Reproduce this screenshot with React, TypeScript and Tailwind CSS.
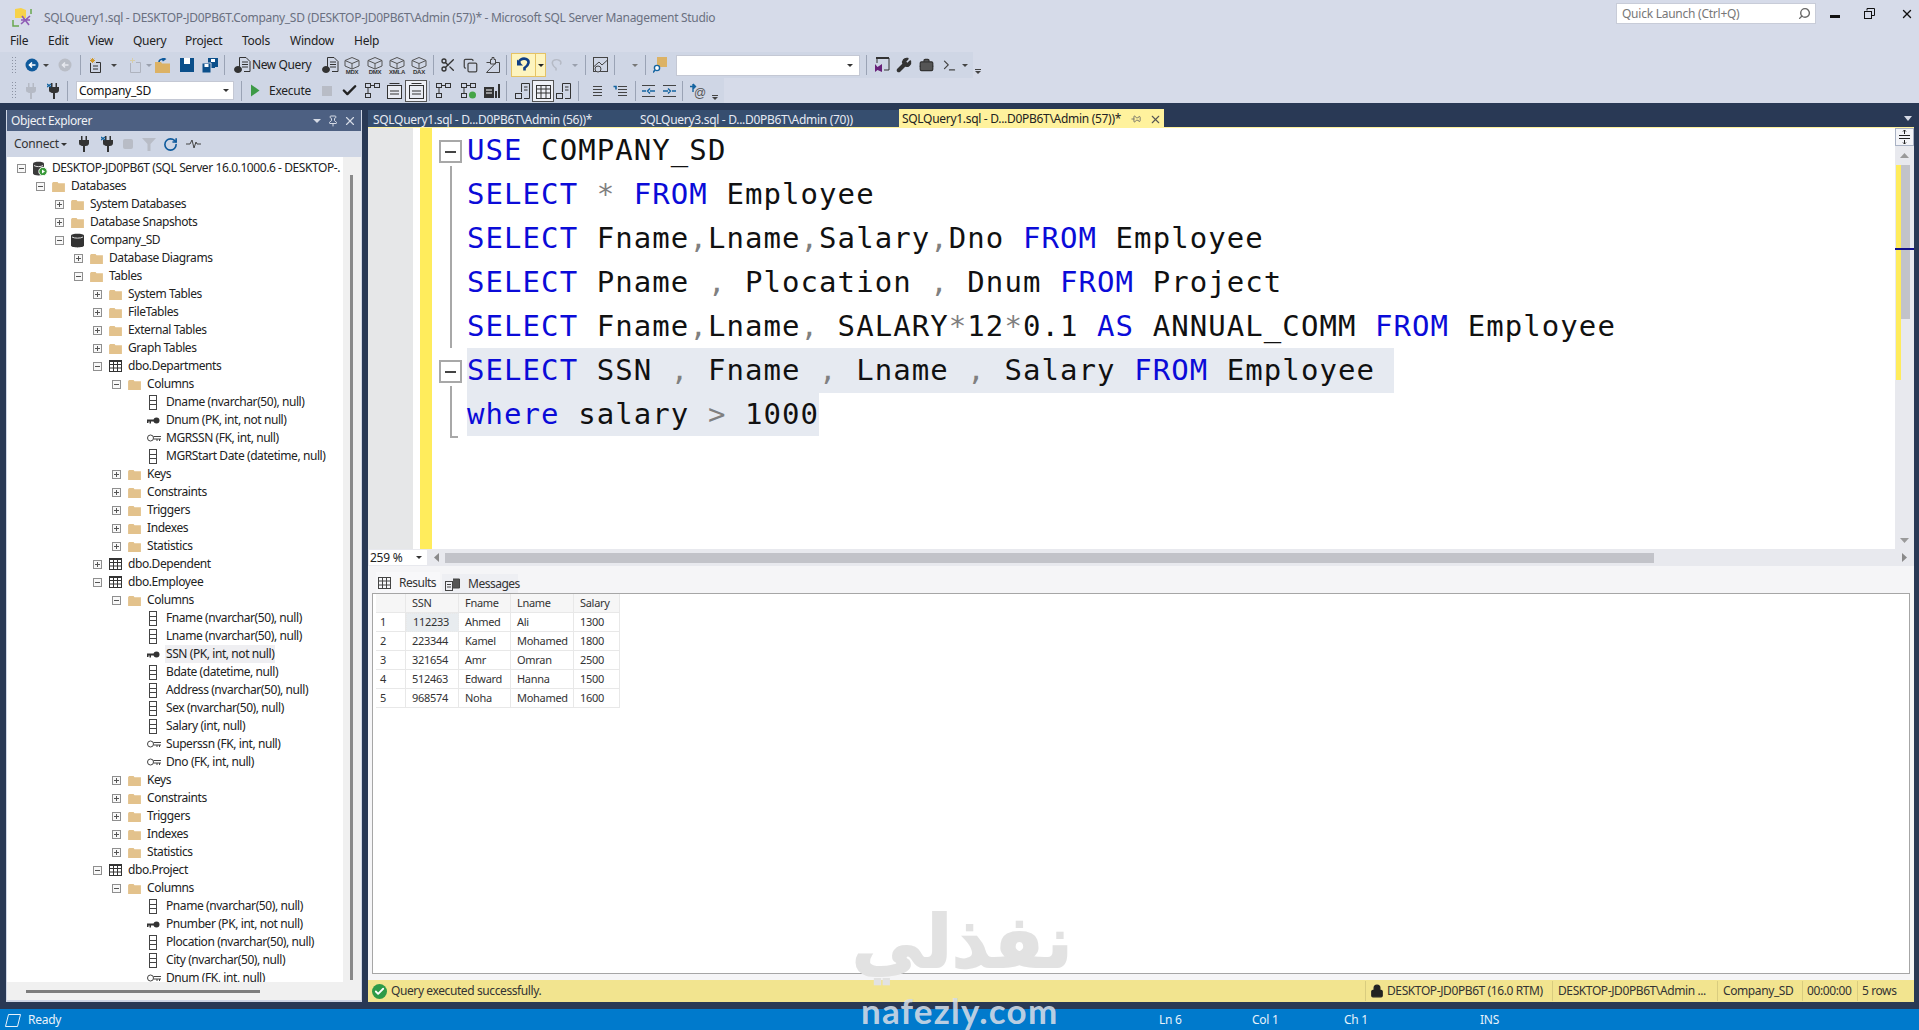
import React from "react"
import { Scissors, Copy, Pin, X, Wrench, BriefcaseBusiness, Check, RotateCw, Search, Lock, Terminal } from "lucide-react"

type IconKind = "server" | "folder" | "db" | "table" | "col" | "pk" | "fk"
type Row = [number, "+" | "-" | "", IconKind, string, boolean?]

const subFolders = (): Row[] =>
  ["Keys", "Constraints", "Triggers", "Indexes", "Statistics"].map((t) => [5, "+", "folder", t] as Row)

const tree: Row[] = [
  [0, "-", "server", "DESKTOP-JD0PB6T (SQL Server 16.0.1000.6 - DESKTOP-."],
  [1, "-", "folder", "Databases"],
  [2, "+", "folder", "System Databases"],
  [2, "+", "folder", "Database Snapshots"],
  [2, "-", "db", "Company_SD"],
  [3, "+", "folder", "Database Diagrams"],
  [3, "-", "folder", "Tables"],
  [4, "+", "folder", "System Tables"],
  [4, "+", "folder", "FileTables"],
  [4, "+", "folder", "External Tables"],
  [4, "+", "folder", "Graph Tables"],
  [4, "-", "table", "dbo.Departments"],
  [5, "-", "folder", "Columns"],
  [6, "", "col", "Dname (nvarchar(50), null)"],
  [6, "", "pk", "Dnum (PK, int, not null)"],
  [6, "", "fk", "MGRSSN (FK, int, null)"],
  [6, "", "col", "MGRStart Date (datetime, null)"],
  ...subFolders(),
  [4, "+", "table", "dbo.Dependent"],
  [4, "-", "table", "dbo.Employee"],
  [5, "-", "folder", "Columns"],
  [6, "", "col", "Fname (nvarchar(50), null)"],
  [6, "", "col", "Lname (nvarchar(50), null)"],
  [6, "", "pk", "SSN (PK, int, not null)", true],
  [6, "", "col", "Bdate (datetime, null)"],
  [6, "", "col", "Address (nvarchar(50), null)"],
  [6, "", "col", "Sex (nvarchar(50), null)"],
  [6, "", "col", "Salary (int, null)"],
  [6, "", "fk", "Superssn (FK, int, null)"],
  [6, "", "fk", "Dno (FK, int, null)"],
  ...subFolders(),
  [4, "-", "table", "dbo.Project"],
  [5, "-", "folder", "Columns"],
  [6, "", "col", "Pname (nvarchar(50), null)"],
  [6, "", "pk", "Pnumber (PK, int, not null)"],
  [6, "", "col", "Plocation (nvarchar(50), null)"],
  [6, "", "col", "City (nvarchar(50), null)"],
  [6, "", "fk", "Dnum (FK, int, null)"],
]

const results = [
  ["1", "112233", "Ahmed", "Ali", "1300"],
  ["2", "223344", "Kamel", "Mohamed", "1800"],
  ["3", "321654", "Amr", "Omran", "2500"],
  ["4", "512463", "Edward", "Hanna", "1500"],
  ["5", "968574", "Noha", "Mohamed", "1600"],
]

function TreeIcon({ kind }: { kind: IconKind }) {
  if (kind === "folder")
    return (
      <svg width="13" height="11" viewBox="0 0 14 12">
        <path d="M0 2.5 L1 1 H6 L7 2.5 H14 V12 H0 Z" fill="#e3c28c" />
      </svg>
    )
  if (kind === "db")
    return (
      <svg width="13" height="15" viewBox="0 0 13 15">
        <path d="M0 2.5 C0 0 13 0 13 2.5 V12.5 C13 15 0 15 0 12.5 Z" fill="#333" />
        <path d="M1 4 C3 5.5 10 5.5 12 4" stroke="#ddd" fill="none" />
      </svg>
    )
  if (kind === "server")
    return (
      <svg width="15" height="15" viewBox="0 0 15 15">
        <path d="M0 2.5 C0 0 11 0 11 2.5 V12.5 C11 15 0 15 0 12.5 Z" fill="#3a3a3a" />
        <path d="M1 4.5 C3 6 8 6 10 4.5" stroke="#ddd" fill="none" />
        <circle cx="10" cy="10.5" r="4.2" fill="#3a9a3a" stroke="#fff" />
        <path d="M9 8.5 L12 10.5 L9 12.5 Z" fill="#fff" />
      </svg>
    )
  if (kind === "table")
    return (
      <svg width="13" height="12" viewBox="0 0 13 12" fill="none" stroke="#333">
        <rect x="0.5" y="0.5" width="12" height="11" />
        <path d="M0 1.5 H13 M0 4.5 H13 M0 8 H13 M4.5 0 V12 M8.5 0 V12" />
      </svg>
    )
  if (kind === "col")
    return (
      <svg width="8" height="15" viewBox="0 0 8 15" className="ml-[2px]" fill="none" stroke="#444">
        <rect x="0.5" y="0.5" width="7" height="14" />
        <path d="M0 5.5 H8 M0 9.5 H8" />
      </svg>
    )
  if (kind === "pk")
    return (
      <svg width="13" height="7" viewBox="0 0 13 7">
        <circle cx="9.5" cy="3.5" r="3" fill="#333" />
        <path d="M0 2.5 H8 V4.5 H4 V6.5 H2.5 V4.5 H1.5 V6 H0 Z" fill="#333" />
      </svg>
    )
  return (
    <svg width="14" height="8" viewBox="0 0 14 8" fill="none" stroke="#444">
      <circle cx="3.5" cy="4" r="3" />
      <path d="M6.5 2.5 H14 M6.5 5 H14 M10 5 V7 M12.5 5 V7" />
    </svg>
  )
}

function TreeRow({ row }: { row: Row }) {
  const [depth, exp, icon, text, hovered] = row
  return (
    <div className="h-[18px] flex items-center whitespace-nowrap tracking-[-0.42px]" style={{ paddingLeft: 10 + depth * 19 }}>
      <div className="w-[16px] shrink-0">
        {exp && (
          <div className="w-[9px] h-[9px] border border-[#8f8f8f] flex items-center justify-center relative bg-[#f8f8f8]">
            <div className="w-[5px] h-px bg-[#555]" />
            {exp === "+" && <div className="absolute w-px h-[5px] bg-[#555]" />}
          </div>
        )}
      </div>
      <div className="w-[19px] shrink-0 flex items-center">
        <TreeIcon kind={icon} />
      </div>
      <span className={hovered ? "bg-[#efeff2] -mx-px px-px text-[#222]" : "text-[#222]"}>{text}</span>
    </div>
  )
}

// toolbar pieces
function Tool({ className = "", children }: { className?: string; children?: React.ReactNode }) {
  return <div className={`w-[20px] h-[20px] shrink-0 flex items-center justify-center ${className}`}>{children}</div>
}
function Drop({ className = "", color = "#444" }: { className?: string; color?: string }) {
  return (
    <div className={`w-[8px] shrink-0 flex justify-center ${className}`}>
      <svg width="6" height="3" viewBox="0 0 6 3">
        <path d="M0 0 H6 L3 3 Z" fill={color} />
      </svg>
    </div>
  )
}
function Sep({ className = "" }: { className?: string }) {
  return <div className={`w-px h-[20px] shrink-0 bg-[#9aa3b5] ${className}`} />
}
function Grip() {
  return <div className="w-[6px] h-[19px] shrink-0 ml-[1px] mr-[1px] bg-[radial-gradient(#8c93a3_0.7px,transparent_0.8px)] bg-[length:3px_3px]" />
}
function Overflow({ className = "" }: { className?: string }) {
  return (
    <div className={`w-[8px] h-[20px] shrink-0 flex flex-col items-center justify-end pb-[1px] gap-[1px] ${className}`}>
      <div className="w-[6px] h-px bg-[#444]" />
      <svg width="6" height="3" viewBox="0 0 6 3">
        <path d="M0 0 H6 L3 3 Z" fill="#444" />
      </svg>
    </div>
  )
}
function Circle({ fill, arrow }: { fill: string; arrow: string }) {
  return (
    <svg width="14" height="14" viewBox="0 0 14 14">
      <circle cx="7" cy="7" r="6.5" fill={fill} />
      <path d="M10.5 7 H5 M7 4.5 L4.5 7 L7 9.5" stroke={arrow} strokeWidth="1.6" fill="none" />
    </svg>
  )
}
function DocDb() {
  return (
    <svg width="17" height="16" viewBox="0 0 17 16" fill="none" stroke="#333">
      <path d="M5.5 10 V0.5 H12 L16 4.5 V14.5 H10" />
      <path d="M8 5 H14 M8 7.5 H14 M8 10 H14" />
      <ellipse cx="4" cy="12.5" rx="3.5" ry="3" fill="#333" />
    </svg>
  )
}
function Cube({ label }: { label: string }) {
  return (
    <svg width="18" height="17" viewBox="0 0 18 17" fill="none">
      <path d="M9 0.5 L16 3.5 V9 L9 12 L2 9 V3.5 Z M2 3.5 L9 6.5 L16 3.5 M9 6.5 V12" stroke="#555" />
      <text x="9" y="16.5" textAnchor="middle" fontSize="6" fontWeight="700" fill="#333" fontFamily="Liberation Sans, sans-serif">
        {label}
      </text>
    </svg>
  )
}
function Save({ double }: { double?: boolean }) {
  if (double)
    return (
      <svg width="16" height="15" viewBox="0 0 16 15">
        <path d="M6 0 H16 V9 H13 V10 H6 Z" fill="#0b4f8a" />
        <rect x="9" y="1" width="4" height="3" fill="#fff" />
        <path d="M0 5 H9 V15 H0 Z" fill="#0b4f8a" stroke="#cfd6e5" />
        <rect x="2.5" y="6" width="4" height="3" fill="#fff" />
      </svg>
    )
  return (
    <svg width="14" height="14" viewBox="0 0 14 14">
      <path d="M0 0 H14 V14 H0 Z" fill="#0b4f8a" />
      <rect x="4" y="0" width="6" height="6" fill="#fff" />
    </svg>
  )
}
function Flow({ mark = false }: { mark?: boolean }) {
  return (
    <svg width="15" height="16" viewBox="0 0 15 16" fill="none" stroke="#333">
      <rect x="0.5" y="0.5" width="5" height="4" />
      <rect x="9.5" y="0.5" width="5" height="4" />
      <rect x="0.5" y="10.5" width="5" height="4" />
      <path d="M6 2.5 H9 M3 5 V10" />
      {mark ? <circle cx="11.5" cy="12" r="3.5" fill="#46a546" stroke="none" /> : null}
    </svg>
  )
}
function Pane({ grid }: { grid?: boolean }) {
  return (
    <svg width="15" height="16" viewBox="0 0 15 16" fill="none" stroke="#333">
      <rect x="0.5" y="2.5" width="14" height="13" fill={grid ? "none" : "#e8ebf2"} />
      <path d={grid ? "M1 6 H14 M1 10 H14 M5 3 V15 M10 3 V15" : "M2.5 0.5 H12.5 M3 8 H12 M3 11 H12"} />
    </svg>
  )
}
function DocResult() {
  return (
    <svg width="15" height="16" viewBox="0 0 15 16" fill="none" stroke="#333">
      <path d="M6.5 9 V0.5 H14.5 V15.5 H9" />
      <path d="M9 4 H12.5 M9 7 H12.5" />
      <rect x="0.5" y="10.5" width="6" height="5" />
    </svg>
  )
}
function Indent({ flip }: { flip?: boolean }) {
  return (
    <svg width="15" height="14" viewBox="0 0 15 14" fill="none" stroke="#444">
      <path d="M1 1.5 H14 M1 12.5 H14" />
      <path d={flip ? "M1 7 H5 M9 7 H14 M9 4.5 L6.5 7 L9 9.5" : "M1 7 H6 M10 7 H14 M6 4.5 L8.5 7 L6 9.5"} stroke="#1464a0" strokeWidth="1.4" />
    </svg>
  )
}
function Lines({ blue }: { blue?: boolean }) {
  return (
    <svg width="15" height="14" viewBox="0 0 15 14" fill="none" stroke="#444">
      <path d="M5 2.5 H14 M5 5.5 H14 M5 8.5 H14 M5 11.5 H14" />
      {blue ? <path d="M0.5 2.5 H3 V5.5" stroke="#1464a0" strokeWidth="1.6" /> : null}
    </svg>
  )
}
function Plug({ color, cross }: { color: string; cross?: boolean }) {
  return (
    <svg width="14" height="16" viewBox="0 0 14 16" fill={color}>
      <path d="M4 0 H5.5 V4 H8.5 V0 H10 V4 H12 V7 C12 10 9 10 8 10 V16 H6 V10 C5 10 2 10 2 7 V4 H4 Z" />
      {cross ? <path d="M0 1 L4 4 M4 1 L0 4" stroke="#1464a0" strokeWidth="1.4" /> : null}
    </svg>
  )
}

function Toolbar1() {
  return (
    <div className="h-[26px] flex items-center pl-[10px]">
      <div className="flex items-center h-[26px] w-[973px] bg-[#cfd6e5] -ml-[10px] pl-[10px] shrink-0">
        <Grip />
        <Tool className="ml-[4px]"><Circle fill="#0f5a9c" arrow="#fff" /></Tool>
        <Drop />
        <Tool className="ml-[5px]"><Circle fill="#b9bdc6" arrow="#e6e8ee" /></Tool>
        <Sep className="ml-[5px]" />
        <Tool className="ml-[4px]">
          <svg width="15" height="16" viewBox="0 0 15 16" fill="none" stroke="#333">
            <path d="M2.5 6 V15.5 H12.5 V5.5 H8" />
            <path d="M4.5 1 V6 M2 3.5 H7 M2.7 1.7 L6.3 5.3 M6.3 1.7 L2.7 5.3" stroke="#d29a2e" />
            <path d="M5 9 H10 M5 12 H10" />
          </svg>
        </Tool>
        <Drop className="ml-[5px]" />
        <Tool className="ml-[7px]">
          <svg width="15" height="16" viewBox="0 0 15 16" fill="none" stroke="#aeb3be">
            <path d="M2.5 6 V15.5 H12.5 V5.5 H8" />
            <path d="M4.5 1 V6 M2 3.5 H7" stroke="#d8cda8" />
          </svg>
        </Tool>
        <Drop color="#9aa0ad" />
        <Tool>
          <svg width="16" height="15" viewBox="0 0 16 15">
            <path d="M0 4 H6 L7 5.5 H15 V15 H0 Z" fill="#dcb265" />
            <path d="M4 4 C4 1.5 7 1 9 1 M7.5 -0.5 L10 1 L7.5 3" stroke="#0f5a9c" strokeWidth="1.6" fill="none" />
          </svg>
        </Tool>
        <Tool className="ml-[4px]"><Save /></Tool>
        <Tool className="ml-[3px]"><Save double /></Tool>
        <Sep className="ml-[4px]" />
        <Tool className="ml-[7px]"><DocDb /></Tool>
        <span className="w-[60px] shrink-0 text-[#222] whitespace-nowrap tracking-[-0.4px]">New Query</span>
        <Tool className="ml-[8px]"><DocDb /></Tool>
        <Tool className="ml-[2px]"><Cube label="MDX" /></Tool>
        <Tool className="ml-[3px]"><Cube label="DMX" /></Tool>
        <Tool className="ml-[2px]"><Cube label="XMLA" /></Tool>
        <Tool className="ml-[2px]"><Cube label="DAX" /></Tool>
        <Sep className="ml-[4px]" />
        <Tool className="ml-[4px]"><Scissors size={16} color="#333" /></Tool>
        <Tool className="ml-[2px]"><Copy size={15} color="#444" /></Tool>
        <Tool className="ml-[3px]">
          <svg width="14" height="16" viewBox="0 0 14 16" fill="none" stroke="#444">
            <path d="M0.5 5.5 H4 M10 5.5 H13.5 V15.5 H0.5 Z M4.5 5 V2.5 H6 V0.5 H8 V2.5 H9.5 V7 H4.5 Z" />
          </svg>
        </Tool>
        <Sep className="ml-[3px]" />
        <div className="ml-[4px] w-[35px] h-[24px] shrink-0 bg-[#fdf4bf] border border-[#e5c365] flex items-center">
          <div className="w-[24px] flex justify-center">
            <svg width="14" height="16" viewBox="0 0 14 16" fill="none">
              <path d="M3 7 C0 3 6 1 9 2 C13 3.5 12 8 7.5 11 V13.5" stroke="#0f3f86" strokeWidth="2.6" />
              <path d="M0 2.5 V8.5 H6 Z" fill="#0f3f86" />
            </svg>
          </div>
          <div className="w-px h-full bg-[#e5c365]" />
          <Drop className="w-[9px]" color="#222" />
        </div>
        <Tool>
          <svg width="13" height="15" viewBox="0 0 14 16" fill="none">
            <path d="M11 7 C14 3 8 1 5 2 C1 3.5 2 8 6.5 11 V13.5" stroke="#b5bac5" strokeWidth="1.6" />
          </svg>
        </Tool>
        <Drop className="ml-[5px]" color="#9aa0ad" />
        <Sep className="ml-[6px]" />
        <Tool className="ml-[4px]">
          <svg width="15" height="16" viewBox="0 0 15 16" fill="none" stroke="#444">
            <rect x="0.5" y="0.5" width="14" height="14" />
            <path d="M0.5 10 L6 5 L9 8 L14.5 3" />
            <circle cx="5" cy="12" r="3" fill="#cfd6e5" />
          </svg>
        </Tool>
        <Sep className="ml-[4px]" />
        <Drop className="ml-[16px]" color="#777" />
        <Sep className="ml-[6px]" />
        <Tool className="ml-[4px]">
          <svg width="15" height="16" viewBox="0 0 15 16">
            <path d="M4 0 H14 V10 H4 Z" fill="#dcb265" />
            <circle cx="4" cy="11" r="2.6" fill="#fff" stroke="#1464a0" strokeWidth="1.4" />
            <path d="M2 13 L0 15.5" stroke="#1464a0" strokeWidth="1.6" />
          </svg>
        </Tool>
        <div className="ml-[6px] w-[184px] h-[21px] shrink-0 bg-white border border-[#c4c8d4] flex items-center justify-end pr-[5px]">
          <Drop className="w-[6px]" color="#333" />
        </div>
        <Sep className="ml-[6px]" />
        <Tool className="ml-[5px]">
          <svg width="15" height="16" viewBox="0 0 15 16" fill="none">
            <path d="M2 6 V1 H14 V13 H9" stroke="#333" />
            <path d="M1 1 H14" stroke="#333" strokeWidth="2" />
            <path d="M0 7 V15 L2.5 13 L7 15 V7 L2.5 10 Z" fill="#68217a" />
          </svg>
        </Tool>
        <Tool className="ml-[2px]"><Wrench size={16} color="#333" fill="#333" /></Tool>
        <Tool className="ml-[2px]"><BriefcaseBusiness size={15} color="#333" fill="#555" /></Tool>
        <Tool className="ml-[3px]"><Terminal size={15} color="#444" /></Tool>
        <Drop className="ml-[2px]" />
        <Overflow className="ml-[5px]" />
      </div>
    </div>
  )
}

function Toolbar2() {
  return (
    <div className="h-[25px] flex items-center">
      <div className="flex items-center h-[25px] w-[724px] bg-[#cfd6e5] pl-[10px] shrink-0">
        <Grip />
        <Tool className="ml-[3px]"><Plug color="#b5bac5" /></Tool>
        <Tool className="ml-[3px]"><Plug color="#333" cross /></Tool>
        <Sep className="ml-[3px]" />
        <div className="ml-[8px] w-[158px] h-[19px] shrink-0 bg-white border border-[#c4c8d4] flex items-center justify-between pl-[2px] pr-[3px]">
          <span className="text-[#111]">Company_SD</span>
          <Drop className="w-[6px]" color="#333" />
        </div>
        <Sep className="ml-[7px]" />
        <svg width="10" height="13" viewBox="0 0 10 13" className="ml-[8px] shrink-0">
          <path d="M1 0.5 L9.5 6.5 L1 12.5 Z" fill="#3d9a46" />
        </svg>
        <span className="ml-[9px] w-[41px] shrink-0 text-[#222]">Execute</span>
        <Tool className="ml-[7px]"><div className="w-[10px] h-[10px] bg-[#b8bcc6]" /></Tool>
        <Tool className="ml-[2px]"><Check size={17} color="#222" strokeWidth={3.4} /></Tool>
        <Tool className="ml-[3px]"><Flow /></Tool>
        <Tool className="ml-[2px]"><Pane /></Tool>
        <Tool className="ml-[2px] bg-[#eef0f6] outline outline-[#555]"><Pane /></Tool>
        <Sep className="ml-[3px]" />
        <Tool className="ml-[3px]"><Flow /></Tool>
        <Tool className="ml-[5px]"><Flow mark /></Tool>
        <Tool className="ml-[4px]">
          <svg width="16" height="14" viewBox="0 0 16 14" fill="#333">
            <path d="M0 3 H10 V14 H0 Z M11 7 H13 V14 H11 Z M14 0 H16 V14 H14 Z" />
            <path d="M2 6 H8 M2 9 H8" stroke="#fff" />
          </svg>
        </Tool>
        <Sep className="ml-[4px]" />
        <Tool className="ml-[5px]"><DocResult /></Tool>
        <Tool className="ml-[1px] bg-[#eef0f6] outline outline-[#555]"><Pane grid /></Tool>
        <Tool><DocResult /></Tool>
        <Sep className="ml-[5px]" />
        <Tool className="ml-[6px]"><Lines /></Tool>
        <Tool className="ml-[5px]"><Lines blue /></Tool>
        <Sep className="ml-[5px]" />
        <Tool className="ml-[2px]"><Indent flip /></Tool>
        <Tool className="ml-[1px]"><Indent /></Tool>
        <Sep className="ml-[3px]" />
        <Tool className="ml-[4px]">
          <svg width="17" height="16" viewBox="0 0 17 16" fill="none">
            <path d="M1 3.5 H6 M4 1 L6.5 3.5 L4 6 M4 1 V9" stroke="#1464a0" strokeWidth="1.4" />
            <text x="11" y="14" textAnchor="middle" fontSize="12" fill="#555" fontFamily="Liberation Sans, sans-serif">@</text>
          </svg>
        </Tool>
        <Overflow className="ml-[4px]" />
      </div>
    </div>
  )
}

function ObjectExplorer() {
  return (
    <div className="w-[356px] shrink-0 flex flex-col bg-[#f0f0f0] border-b-2 border-x border-[#cfd6e5]">
      <div className="h-[21px] shrink-0 bg-[#4d6082] flex items-center pl-[4px] pr-[4px] text-[#f0f2f6] tracking-[-0.4px]">
        <span className="flex-1">Object Explorer</span>
        <svg width="8" height="4" viewBox="0 0 8 4" className="mr-[6px]">
          <path d="M0 0 H8 L4 4 Z" fill="#d5dae5" />
        </svg>
        <Pin size={12} color="#d5dae5" className="mr-[4px]" />
        <X size={14} color="#d5dae5" />
      </div>
      <div className="h-[26px] shrink-0 bg-[#cfd6e5] flex items-center pl-[7px] text-[#333]">
        <span>Connect</span>
        <Drop className="ml-[1px]" color="#333" />
        <Tool className="ml-[6px]"><Plug color="#333" /></Tool>
        <Tool className="ml-[4px]"><Plug color="#333" cross /></Tool>
        <Tool><div className="w-[10px] h-[10px] rounded-[2px] bg-[#b8bcc6]" /></Tool>
        <Tool className="ml-[1px]">
          <svg width="14" height="14" viewBox="0 0 14 14">
            <path d="M0 1 H14 L8.5 7 V14 H5.5 V7 Z" fill="#b8bcc6" />
          </svg>
        </Tool>
        <Tool className="ml-[2px]"><RotateCw size={15} color="#0f5a9c" strokeWidth={2.6} /></Tool>
        <Tool className="ml-[3px]">
          <svg width="15" height="10" viewBox="0 0 15 10" fill="none" stroke="#444">
            <path d="M0 5 H4 L6 1 L8 9 L10 3 L11 5 H15" />
          </svg>
        </Tool>
      </div>
      <div className="flex-1 flex min-h-0">
        <div className="w-[336px] shrink-0 flex flex-col">
          <div className="flex-1 bg-white overflow-hidden pt-[2px] min-h-0">
            {tree.map((row, i) => (
              <TreeRow key={i} row={row} />
            ))}
          </div>
          <div className="h-[18px] shrink-0 flex items-center pl-[19px]">
            <div className="w-[234px] h-[3px] bg-[#7d7d7d]" />
          </div>
        </div>
        <div className="flex-1 pt-[18px] pb-[20px] pl-[7px]">
          <div className="w-[3px] h-full bg-[#8a8a8a]" />
        </div>
      </div>
    </div>
  )
}

function Tok({ k, o, children }: { k?: boolean; o?: boolean; children: React.ReactNode }) {
  return <span className={k ? "text-[#0b0bd8]" : o ? "text-[#808080]" : ""}>{children}</span>
}

function FoldRow({ type }: { type: "box" | "line" }) {
  return (
    <div className="h-[44px] w-[23px] ml-[7px] flex flex-col items-center">
      {type === "box" ? (
        <>
          <div className="mt-[12px] w-[23px] h-[23px] shrink-0 border-2 border-[#a8a8a8] flex items-center justify-center">
            <div className="w-[11px] h-[2px] bg-[#444]" />
          </div>
          <div className="mt-[3px] flex-1 w-[2px] bg-[#a8a8a8]" />
        </>
      ) : (
        <div className="h-full w-[2px] bg-[#a8a8a8]" />
      )}
    </div>
  )
}

function Editor() {
  return (
    <div className="h-[421px] shrink-0 flex bg-white overflow-hidden">
      <div className="w-[45px] shrink-0 bg-[#e6e7e8]" />
      <div className="w-[7px] shrink-0 bg-white" />
      <div className="w-[12px] shrink-0 bg-[#ffec5c]" />
      <div className="w-[35px] shrink-0">
        <FoldRow type="box" />
        <FoldRow type="line" />
        <FoldRow type="line" />
        <FoldRow type="line" />
        <FoldRow type="line" />
        <FoldRow type="box" />
        <FoldRow type="line" />
        <div className="ml-[18px] w-[8px] h-[2px] bg-[#a8a8a8]" />
      </div>
      <div className="flex-1 font-['DejaVu_Sans_Mono',monospace] text-[29px] leading-[44px] tracking-[1.07px] whitespace-pre text-[#111]">
        <div className="h-[44px]"><Tok k>USE</Tok> COMPANY_SD</div>
        <div className="h-[44px]"><Tok k>SELECT</Tok> <Tok o>*</Tok> <Tok k>FROM</Tok> Employee</div>
        <div className="h-[44px]"><Tok k>SELECT</Tok> Fname<Tok o>,</Tok>Lname<Tok o>,</Tok>Salary<Tok o>,</Tok>Dno <Tok k>FROM</Tok> Employee</div>
        <div className="h-[44px]"><Tok k>SELECT</Tok> Pname <Tok o>,</Tok> Plocation <Tok o>,</Tok> Dnum <Tok k>FROM</Tok> Project</div>
        <div className="h-[44px]"><Tok k>SELECT</Tok> Fname<Tok o>,</Tok>Lname<Tok o>,</Tok> SALARY<Tok o>*</Tok>12<Tok o>*</Tok>0.1 <Tok k>AS</Tok> ANNUAL_COMM <Tok k>FROM</Tok> Employee</div>
        <div className="h-[44px]"><span className="inline-block h-[45px] bg-[#e6eaf1]"><Tok k>SELECT</Tok> SSN <Tok o>,</Tok> Fname <Tok o>,</Tok> Lname <Tok o>,</Tok> Salary <Tok k>FROM</Tok> Employee </span></div>
        <div className="h-[44px]"><span className="inline-block h-[44px] bg-[#e6eaf1]"><Tok k>where</Tok> salary <Tok o>&gt;</Tok> 1000</span></div>
      </div>
    </div>
  )
}

function VScroll() {
  return (
    <div className="w-[19px] shrink-0 bg-[#e8e9ee] flex flex-col relative">
      <div className="h-[18px] shrink-0 bg-[#f3f4f8] border border-[#a9b2c4] flex items-center justify-center">
        <svg width="11" height="14" viewBox="0 0 11 14" fill="none" stroke="#222">
          <path d="M0 5.5 H11 M0 8.5 H11 M5.5 0 V4 M5.5 10 V14 M4 1.5 L5.5 0 L7 1.5 M4 12.5 L5.5 14 L7 12.5" />
        </svg>
      </div>
      <div className="h-[19px] shrink-0 flex items-center justify-center">
        <svg width="9" height="5" viewBox="0 0 9 5"><path d="M0 5 H9 L4.5 0 Z" fill="#9a9a9a" /></svg>
      </div>
      <div className="flex-1 flex items-start">
        <div className="w-[5px] h-[215px] bg-[#ffec5c] ml-[1px]" />
        <div className="w-[9px] h-[154px] bg-[#c2c3c9]" />
      </div>
      <div className="h-[17px] shrink-0 flex items-center justify-center">
        <svg width="9" height="5" viewBox="0 0 9 5"><path d="M0 0 H9 L4.5 5 Z" fill="#9a9a9a" /></svg>
      </div>
      <div className="absolute left-0 right-0 top-[120px] h-[2px] bg-[#10108c]" />
      <div className="h-[17px] shrink-0 flex items-center justify-center">
        <svg width="5" height="9" viewBox="0 0 5 9"><path d="M0 0 V9 L5 4.5 Z" fill="#8a8a8a" /></svg>
      </div>
    </div>
  )
}

function ResultsGrid() {
  const cell = "border-r border-b border-[#e8e8e8] h-[19px] flex items-center pl-[6px] text-[#333]"
  return (
    <div className="grid grid-cols-[30px_53px_52px_63px_46px] w-[244px] ml-[3px] text-[11px] tracking-[-0.3px]">
      {["", "SSN", "Fname", "Lname", "Salary"].map((h) => (
        <div key={h} className={`${cell} bg-[#f6f6f6]`}>{h}</div>
      ))}
      {results.map((row) =>
        row.map((v, i) => (
          <div
            key={row[0] + i}
            className={
              i === 0
                ? `${cell} !pl-[4px] bg-white`
                : row[0] === "1" && i === 1
                  ? `${cell} bg-[#e8ecef] border border-dotted border-[#222]`
                  : cell
            }
          >
            {v}
          </div>
        )),
      )}
    </div>
  )
}

function StatusSep() {
  return <div className="w-px h-[20px] bg-[#f9f3c8] border-l border-[#d9cc7f]" />
}

export default function App() {
  return (
    <div className="relative w-[1919px] h-[1030px] overflow-hidden flex flex-col bg-[#d6dbe9] font-['Noto_Sans',sans-serif] text-[12px] tracking-[-0.25px]">
      {/* title bar */}
      <div className="h-[30px] shrink-0 flex items-center pt-[6px]">
        <svg width="20" height="20" viewBox="0 0 20 20" className="ml-[12px] mr-[12px] shrink-0">
          <path d="M3 1 L9 0 L14 2 V10 H3 Z" fill="#f7d24a" />
          <path d="M1 12 V18 H7 M19 6 V1" stroke="#6aa84f" strokeWidth="1.5" fill="none" />
          <path d="M9 16 L18 8 M10 8 L17 17 M9 12 H18" stroke="#8e5bb5" strokeWidth="1.6" />
        </svg>
        <span className="text-[#6a7080] whitespace-nowrap flex-1 tracking-[-0.3px]">
          SQLQuery1.sql - DESKTOP-JD0PB6T.Company_SD (DESKTOP-JD0PB6T\Admin (57))* - Microsoft SQL Server Management Studio
        </span>
        <div className="w-[200px] h-[21px] -mt-[9px] shrink-0 bg-white border border-[#c8ccd8] flex items-center justify-between pl-[5px] pr-[4px] text-[#777]">
          <span>Quick Launch (Ctrl+Q)</span>
          <Search size={13} color="#666" strokeWidth={2.6} className="-scale-x-100" />
        </div>
        <div className="w-[103px] shrink-0 flex items-center -mt-[9px] pl-[14px]">
          <div className="w-[10px] h-[3px] mt-[6px] bg-[#111]" />
          <svg width="11" height="11" viewBox="0 0 11 11" fill="none" stroke="#111" className="ml-[24px]">
            <path d="M3 2.5 V0.5 H10.5 V7.5 H8" strokeWidth="1" />
            <rect x="0.5" y="3.5" width="7" height="7" strokeWidth="1" />
          </svg>
          <X size={14} color="#111" strokeWidth={2.4} className="ml-[25px]" />
        </div>
      </div>
      {/* menu */}
      <div className="h-[22px] shrink-0 flex items-center pl-[10px] text-[#222]">
        <span className="w-[38px]">File</span>
        <span className="w-[40px]">Edit</span>
        <span className="w-[45px]">View</span>
        <span className="w-[52px]">Query</span>
        <span className="w-[57px]">Project</span>
        <span className="w-[48px]">Tools</span>
        <span className="w-[64px]">Window</span>
        <span>Help</span>
      </div>
      <Toolbar1 />
      <Toolbar2 />
      {/* main */}
      <div className="flex-1 min-h-0 bg-[#293955] flex pt-[7px] pb-[7px] pl-[6px] pr-[5px] gap-[6px]">
        <ObjectExplorer />
        <div className="flex-1 min-w-0 flex flex-col">
          {/* document tabs */}
          <div className="h-[17px] shrink-0 flex items-center text-[#e6eaf2] whitespace-nowrap tracking-[-0.3px]">
            <div className="w-[272px] h-full bg-[#364e6f] pl-[5px] pt-[2px] flex items-center">SQLQuery1.sql - D...D0PB6T\Admin (56))*</div>
            <div className="w-[259px] h-full bg-[#364e6f] pt-[2px] flex items-center">SQLQuery3.sql - D...D0PB6T\Admin (70))</div>
            <div className="w-[265px] h-[18px] -mt-px bg-[#fff29d] pl-[3px] pr-[2px] pt-[2px] flex items-center text-[#222]">
              <span className="flex-1">SQLQuery1.sql - D...D0PB6T\Admin (57))*</span>
              <Pin size={10} color="#666" className="rotate-90 mr-[8px]" />
              <X size={13} color="#555" />
            </div>
            <div className="flex-1 flex justify-end pr-[2px]">
              <svg width="8" height="5" viewBox="0 0 8 5"><path d="M0 0 H8 L4 5 Z" fill="#d5dae5" /></svg>
            </div>
          </div>
          <div className="h-px shrink-0 bg-[#fff29d]" />
          <div className="flex-1 min-h-0 flex flex-col bg-[#f2f2f5]">
            <div className="h-[438px] shrink-0 flex">
              <div className="flex-1 min-w-0 flex flex-col">
                <Editor />
                {/* zoom + horizontal scroll */}
                <div className="h-[17px] shrink-0 bg-[#e8e9ee] flex items-center">
                  <div className="ml-[1px] w-[58px] h-[15px] bg-white flex items-center justify-between pl-[1px] pr-[4px] text-[#222]">
                    <span>259 %</span>
                    <Drop className="w-[6px]" color="#333" />
                  </div>
                  <svg width="5" height="9" viewBox="0 0 5 9" className="ml-[7px] shrink-0"><path d="M5 0 V9 L0 4.5 Z" fill="#8a8a8a" /></svg>
                  <div className="ml-[6px] w-[1209px] h-[10px] bg-[#c2c3c9]" />
                </div>
              </div>
              <VScroll />
            </div>
            {/* results */}
            <div className="flex-1 min-h-0 flex flex-col bg-[#f5f5f7] pb-[6px] pl-[4px] pr-[4px]">
              <div className="h-[27px] shrink-0 flex items-end pl-[4px] text-[#333] tracking-[-0.5px]">
                <div className="w-[64px] h-[21px] bg-[#f8f8fa] flex items-center pl-[2px]">
                  <svg width="13" height="12" viewBox="0 0 13 12" fill="none" stroke="#444" className="shrink-0">
                    <rect x="0.5" y="0.5" width="12" height="11" />
                    <path d="M0 4 H13 M0 8 H13 M4.5 0 V12 M8.5 0 V12" />
                  </svg>
                  <span className="ml-[8px]">Results</span>
                </div>
                <div className="ml-[2px] w-[76px] h-[19px] bg-[#eeeff3] flex items-center pl-[3px]">
                  <svg width="15" height="14" viewBox="0 0 15 14" fill="none" stroke="#444" className="shrink-0">
                    <rect x="0.5" y="4.5" width="7" height="9" />
                    <path d="M8 2 H14.5 V11 H8" fill="#555" />
                    <path d="M2 7.5 H6 M2 10 H6" />
                  </svg>
                  <span className="ml-[8px]">Messages</span>
                </div>
              </div>
              <div className="flex-1 min-h-0 bg-white border border-[#a6a6a6]">
                <ResultsGrid />
              </div>
            </div>
            {/* query status */}
            <div className="h-[22px] shrink-0 bg-[#f2e48f] flex items-center pl-[4px] pr-[14px] text-[#333] tracking-[-0.4px]">
              <div className="w-[15px] h-[15px] rounded-full bg-[#2e9a48] flex items-center justify-center shrink-0">
                <Check size={11} color="#fff" strokeWidth={4} />
              </div>
              <span className="ml-[4px] flex-1">Query executed successfully.</span>
              <StatusSep />
              <Lock size={14} color="#222" fill="#222" className="ml-[4px] mr-[3px]" />
              <span className="w-[165px]">DESKTOP-JD0PB6T (16.0 RTM)</span>
              <StatusSep />
              <span className="ml-[5px] w-[159px]">DESKTOP-JD0PB6T\Admin ...</span>
              <StatusSep />
              <span className="ml-[5px] w-[79px]">Company_SD</span>
              <StatusSep />
              <span className="ml-[4px] w-[50px]">00:00:00</span>
              <StatusSep />
              <span className="ml-[4px] w-[38px]">5 rows</span>
            </div>
          </div>
        </div>
      </div>
      {/* status bar */}
      <div className="h-[21px] shrink-0 bg-[#007acc] flex items-center pt-px text-[#e8f2fb]">
        <svg width="16" height="13" viewBox="0 0 16 13" fill="none" stroke="#e8f2fb" className="ml-[5px] shrink-0">
          <path d="M3.5 0.5 H15.5 L12.5 12.5 H0.5 Z" />
        </svg>
        <span className="ml-[7px] w-[1131px]">Ready</span>
        <span className="w-[93px]">Ln 6</span>
        <span className="w-[92px]">Col 1</span>
        <span className="w-[136px]">Ch 1</span>
        <span>INS</span>
      </div>
      {/* site watermark */}
      <div className="absolute left-[852px] top-[897px] pointer-events-none text-[#e2e2e2] text-[72px] font-bold font-['DejaVu_Sans',sans-serif] leading-[90px] tracking-normal [-webkit-text-stroke:2px_#e2e2e2]">
        نفذلي
      </div>
      <div className="absolute left-[861px] top-[990px] pointer-events-none text-[#d3dbe6]/90 text-[35px] font-bold font-['Lato',sans-serif] leading-[40px] tracking-[1.2px]">
        nafezly.com
      </div>
    </div>
  )
}
